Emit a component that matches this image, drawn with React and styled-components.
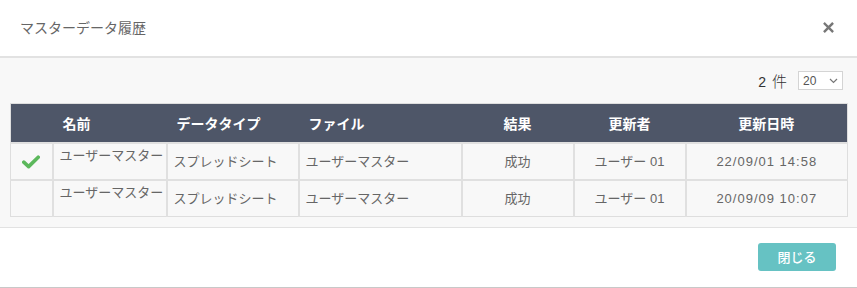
import React from "react";
import styled, { createGlobalStyle } from "styled-components";

const Global = createGlobalStyle`
  html, body { margin: 0; padding: 0; background: #fff; }
  body { font-family: "Noto Sans CJK JP", "Noto Sans", sans-serif; }
`;

const Modal = styled.div`
  width: 857px;
  height: 288px;
  box-sizing: border-box;
  display: flex;
  flex-direction: column;
  background: #fff;
  border-bottom: 1px solid #c8c8c8;
`;

const Header = styled.div`
  height: 58px;
  box-sizing: border-box;
  display: flex;
  align-items: center;
  justify-content: space-between;
  padding: 0 23px 2px 20px;
  border-bottom: 2px solid #e2e2e2;
`;

const Title = styled.h1`
  margin: 0;
  font-size: 14px;
  font-weight: 400;
  color: #666;
`;

const CloseButton = styled.button`
  border: 0;
  background: none;
  padding: 0;
  width: 11px;
  height: 11px;
  display: flex;
  align-items: center;
  justify-content: center;
  cursor: pointer;
`;

const Body = styled.div`
  background: #f8f8f8;
  padding: 13px 10px 10px;
  border-bottom: 1px solid #e2e2e2;
`;

const Toolbar = styled.div`
  display: flex;
  justify-content: flex-end;
  align-items: center;
  gap: 11px;
  padding-right: 4px;
  height: 19px;
  margin-bottom: 13px;
`;

const Count = styled.span`
  display: flex;
  align-items: baseline;
  gap: 6px;
  color: #333;
`;

const CountNum = styled.span`
  font-family: "Liberation Sans", Arial, sans-serif;
  font-size: 14px;
`;

const CountUnit = styled.span`
  font-family: "Noto Sans CJK JP", sans-serif;
  font-size: 15px;
  font-weight: 300;
`;

const Select = styled.div`
  width: 45px;
  height: 19px;
  box-sizing: border-box;
  border: 1px solid #d4d4d4;
  background: #fff;
  display: flex;
  align-items: center;
  justify-content: space-between;
  padding: 0 4px;
  font-family: "Liberation Sans", Arial, sans-serif;
  font-size: 12px;
  color: #555;
`;

const Table = styled.table`
  width: 837px;
  border-collapse: collapse;
  table-layout: fixed;
  border: 1px solid #dedede;
`;

const Th = styled.th`
  background: #4e5668;
  color: #fff;
  height: 38px;
  padding: 0 10px;
  font-size: 14px;
  font-weight: 700;
  text-align: ${(p) => (p.$center ? "center" : "left")};
  border: 0;
`;

const Td = styled.td`
  height: 33px;
  padding: ${(p) => (p.$top ? "2px 4px 0 6px" : "0 6px")};
  vertical-align: ${(p) => (p.$top ? "top" : "middle")};
  font-family: "Liberation Sans", "Noto Sans CJK JP", sans-serif;
  font-size: 13px;
  line-height: 19px;
  letter-spacing: ${(p) => (p.$wide ? "1px" : "0")};
  color: #666;
  text-align: ${(p) => (p.$center ? "center" : "left")};
  border: 2px solid #e0e0e0;
  white-space: nowrap;
  overflow: hidden;
  &:first-child { border-left: 1px solid #dedede; }
  &:last-child { border-right: 1px solid #dedede; }
`;

const Row = styled.tr`
  &:last-child td { border-bottom: 1px solid #dedede; }
`;

const CheckCell = styled(Td)`
  text-align: center;
  padding: 0;
`;

const Footer = styled.div`
  flex: 1;
  display: flex;
  justify-content: flex-end;
  align-items: center;
  padding: 0 21px 2px 0;
`;

const PrimaryButton = styled.button`
  width: 78px;
  height: 28px;
  border: 0;
  border-radius: 3px;
  background: #66c2c3;
  color: #fff;
  font-family: "Noto Sans CJK JP", sans-serif;
  font-size: 13px;
  font-weight: 500;
  cursor: pointer;
`;

const rows = [
  { ok: true, name: "ユーザーマスター", type: "スプレッドシート", file: "ユーザーマスター", result: "成功", user: "ユーザー 01", date: "22/09/01 14:58" },
  { ok: false, name: "ユーザーマスター", type: "スプレッドシート", file: "ユーザーマスター", result: "成功", user: "ユーザー 01", date: "20/09/09 10:07" },
];

export default function App() {
  return (
    <>
      <Global />
      <Modal>
        <Header>
          <Title>マスターデータ履歴</Title>
          <CloseButton aria-label="close">
            <svg width="11" height="11" viewBox="0 0 11 11">
              <path d="M1.8 1.8 L9.2 9.2 M9.2 1.8 L1.8 9.2" stroke="#777" strokeWidth="2.4" strokeLinecap="square" />
            </svg>
          </CloseButton>
        </Header>
        <Body>
          <Toolbar>
            <Count>
              <CountNum>2</CountNum>
              <CountUnit>件</CountUnit>
            </Count>
            <Select>
              <span>20</span>
              <svg width="9" height="6" viewBox="0 0 9 6">
                <path d="M1 1 L4.5 4.5 L8 1" stroke="#777" strokeWidth="1.2" fill="none" />
              </svg>
            </Select>
          </Toolbar>
          <Table>
            <colgroup>
              <col style={{ width: 42 }} />
              <col style={{ width: 114 }} />
              <col style={{ width: 132 }} />
              <col style={{ width: 163 }} />
              <col style={{ width: 112 }} />
              <col style={{ width: 112 }} />
              <col style={{ width: 162 }} />
            </colgroup>
            <thead>
              <tr>
                <Th />
                <Th>名前</Th>
                <Th>データタイプ</Th>
                <Th>ファイル</Th>
                <Th $center>結果</Th>
                <Th $center>更新者</Th>
                <Th $center>更新日時</Th>
              </tr>
            </thead>
            <tbody>
              {rows.map((r, i) => (
                <Row key={i}>
                  <CheckCell>
                    {r.ok && (
                      <svg width="18" height="14" viewBox="0 0 18 14" style={{ display: "block", margin: "0 auto" }}>
                        <path d="M1.8 7.2 L6.6 11.6 L16.2 2.2" stroke="#5cb85c" strokeWidth="3.6" fill="none" strokeLinecap="round" strokeLinejoin="round" />
                      </svg>
                    )}
                  </CheckCell>
                  <Td $top>{r.name}</Td>
                  <Td>{r.type}</Td>
                  <Td>{r.file}</Td>
                  <Td $center>{r.result}</Td>
                  <Td $center>{r.user}</Td>
                  <Td $center $wide>{r.date}</Td>
                </Row>
              ))}
            </tbody>
          </Table>
        </Body>
        <Footer>
          <PrimaryButton>閉じる</PrimaryButton>
        </Footer>
      </Modal>
    </>
  );
}
